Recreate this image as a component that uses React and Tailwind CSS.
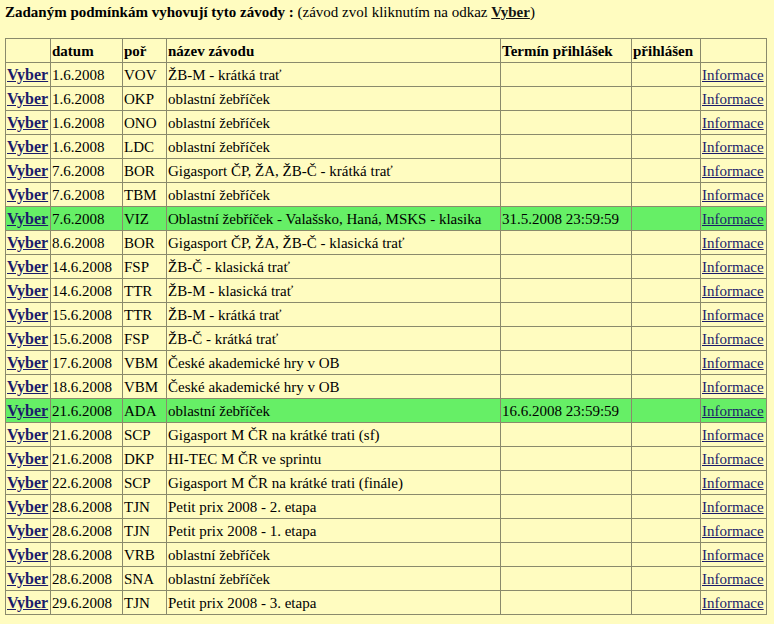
import React from "react";

const rows = [
  ["1.6.2008", "VOV", "ŽB-M - krátká trať", ""],
  ["1.6.2008", "OKP", "oblastní žebříček", ""],
  ["1.6.2008", "ONO", "oblastní žebříček", ""],
  ["1.6.2008", "LDC", "oblastní žebříček", ""],
  ["7.6.2008", "BOR", "Gigasport ČP, ŽA, ŽB-Č - krátká trať", ""],
  ["7.6.2008", "TBM", "oblastní žebříček", ""],
  ["7.6.2008", "VIZ", "Oblastní žebříček - Valašsko, Haná, MSKS - klasika", "31.5.2008 23:59:59", true],
  ["8.6.2008", "BOR", "Gigasport ČP, ŽA, ŽB-Č - klasická trať", ""],
  ["14.6.2008", "FSP", "ŽB-Č - klasická trať", ""],
  ["14.6.2008", "TTR", "ŽB-M - klasická trať", ""],
  ["15.6.2008", "TTR", "ŽB-M - krátká trať", ""],
  ["15.6.2008", "FSP", "ŽB-Č - krátká trať", ""],
  ["17.6.2008", "VBM", "České akademické hry v OB", ""],
  ["18.6.2008", "VBM", "České akademické hry v OB", ""],
  ["21.6.2008", "ADA", "oblastní žebříček", "16.6.2008 23:59:59", true],
  ["21.6.2008", "SCP", "Gigasport M ČR na krátké trati (sf)", ""],
  ["21.6.2008", "DKP", "HI-TEC M ČR ve sprintu", ""],
  ["22.6.2008", "SCP", "Gigasport M ČR na krátké trati (finále)", ""],
  ["28.6.2008", "TJN", "Petit prix 2008 - 2. etapa", ""],
  ["28.6.2008", "TJN", "Petit prix 2008 - 1. etapa", ""],
  ["28.6.2008", "VRB", "oblastní žebříček", ""],
  ["28.6.2008", "SNA", "oblastní žebříček", ""],
  ["29.6.2008", "TJN", "Petit prix 2008 - 3. etapa", ""],
];

const cell = "border border-[#8a8a6c] px-[1px] py-0 text-left align-middle whitespace-nowrap overflow-hidden";

export default function App() {
  return (
    <div className="min-h-[624px] w-[774px] bg-[#fffcc0] text-black text-[15px] leading-[18px] font-['Liberation_Serif']">
      <div className="pl-[5px] pt-[3px]">
        <b>Zadaným podmínkám vyhovují tyto závody :</b> (závod zvol kliknutím na odkaz{" "}
        <b className="underline text-[#141414]">Vyber</b>)
      </div>
      <table className="mt-[17px] ml-[5px] w-[761px] table-fixed border-collapse">
        <colgroup>
          <col className="w-[45px]" />
          <col className="w-[72px]" />
          <col className="w-[44px]" />
          <col className="w-[334px]" />
          <col className="w-[131px]" />
          <col className="w-[69px]" />
          <col className="w-[66px]" />
        </colgroup>
        <thead>
          <tr className="h-[24px]">
            <th className={cell}></th>
            <th className={cell}>datum</th>
            <th className={cell}>poř</th>
            <th className={cell}>název závodu</th>
            <th className={cell}>Termín přihlášek</th>
            <th className={cell}>přihlášen</th>
            <th className={cell}></th>
          </tr>
        </thead>
        <tbody>
          {rows.map((r, i) => (
            <tr key={i} className={r[4] ? "h-[24px] bg-[#66ef66]" : "h-[24px]"}>
              <td className={cell}>
                <a href="#" className="font-bold underline text-[#1b1b6b] text-[16px]">Vyber</a>
              </td>
              <td className={cell}>{r[0]}</td>
              <td className={cell}>{r[1]}</td>
              <td className={cell}>{r[2]}</td>
              <td className={cell}>{r[3]}</td>
              <td className={cell}></td>
              <td className={cell}>
                <a href="#" className="underline text-[#1b1b6b]">Informace</a>
              </td>
            </tr>
          ))}
        </tbody>
      </table>
    </div>
  );
}
